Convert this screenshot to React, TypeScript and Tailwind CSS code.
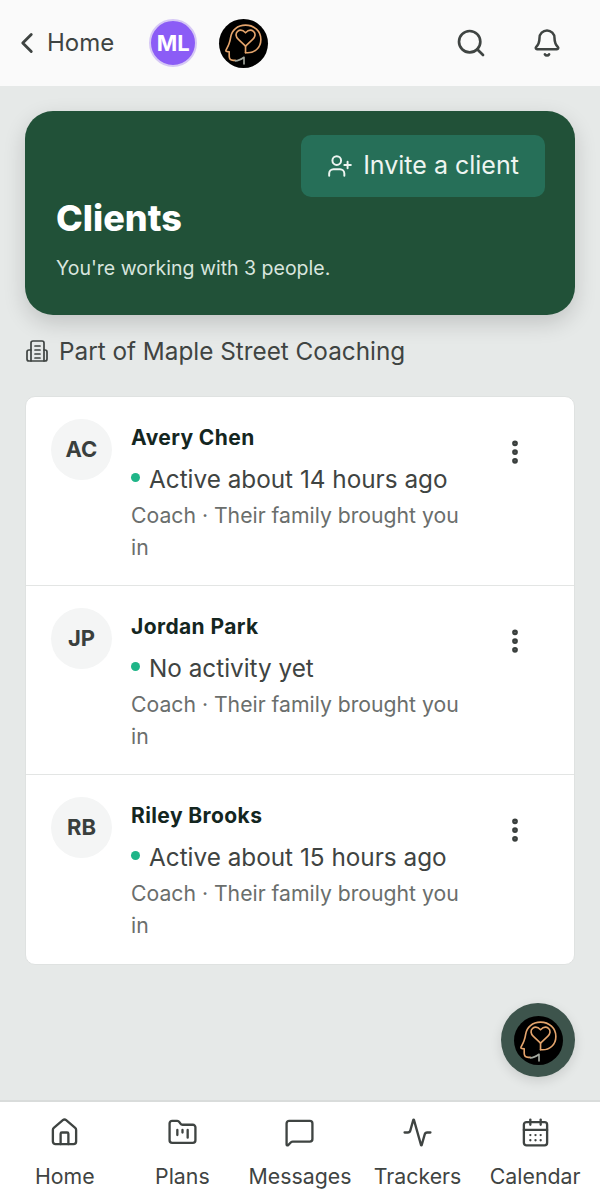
import {
  Activity,
  Bell,
  CalendarDays,
  ChevronLeft,
  EllipsisVertical,
  FolderKanban,
  House,
  MessageSquare,
  Search,
  UserPlus,
} from "lucide-react";

const clients = [
  { initials: "AC", name: "Avery Chen", status: "Active about 14 hours ago" },
  { initials: "JP", name: "Jordan Park", status: "No activity yet" },
  { initials: "RB", name: "Riley Brooks", status: "Active about 15 hours ago" },
];

const navItems = [
  { label: "Home", icon: House },
  { label: "Plans", icon: FolderKanban },
  { label: "Messages", icon: MessageSquare },
  { label: "Trackers", icon: Activity },
  { label: "Calendar", icon: CalendarDays },
];

function BrandLogo({ className }: { className: string }) {
  return (
    <div className={`rounded-full bg-black ${className}`}>
      <svg viewBox="0 0 48 48" fill="none" className="w-full h-full">
        <path
          d="M26 33c9 1 15-5 15-13 0-8-6.500-14-15-14-8 0-13.500 5-14.500 11.500-.4 2.500-.8 4.500-1.600 6.500-.8 2.500-2 4.500-3 6.500-.4.8 0 1.300.8 1.400l2.300.3v4.300c0 2.500 1.500 4 4 4H16"
          stroke="#e4a46c"
          strokeWidth="1.600"
          strokeLinecap="round"
          strokeLinejoin="round"
        />
        <path
          d="M26 26.500l-7-6.500c-2.800-2.500-3-6-.8-7.800 2.200-1.800 5.300-1.300 7.800 1.300 2.500-2.600 5.600-3.100 7.800-1.300 2.200 1.800 2 5.300-.8 7.800z"
          stroke="#e4a46c"
          strokeWidth="1.600"
          strokeLinejoin="round"
        />
        <path d="M26 26.500V33" stroke="#e4a46c" strokeWidth="1.600" strokeLinecap="round" />
        <path
          d="M16 41c3 0 5-1 8.500-3.500V44"
          stroke="#a3a89f"
          strokeWidth="1.600"
          strokeLinecap="round"
          strokeLinejoin="round"
        />
      </svg>
    </div>
  );
}

function OrgIcon() {
  return (
    <svg
      viewBox="0 0 24 24"
      fill="none"
      stroke="currentColor"
      strokeWidth="1.700"
      strokeLinecap="round"
      strokeLinejoin="round"
      className="w-[24px] h-[24px] mr-[10px] shrink-0"
    >
      <path d="M6 22V4a2 2 0 0 1 2-2h9a2 2 0 0 1 2 2v18" />
      <path d="M6 11H4a2 2 0 0 0-2 2v7a2 2 0 0 0 2 2h16a2 2 0 0 0 2-2v-7a2 2 0 0 0-2-2h-1" />
      <path d="M10 7h5M10 11h5M10 15h5M10 19h5" />
    </svg>
  );
}

function ClientRow({
  initials,
  name,
  status,
}: {
  initials: string;
  name: string;
  status: string;
}) {
  return (
    <div className="flex h-[189px] border-b border-[#e3e5e4] last:border-b-0 pl-[25px] pr-[44px] pt-[22px]">
      <div className="w-[61px] h-[61px] shrink-0 rounded-full bg-[#f4f5f5] flex items-center justify-center text-[22px] font-bold text-[#3a3f3d]">
        {initials}
      </div>
      <div className="ml-[19px] w-[340px] pt-[4px]">
        <div className="text-[21px] leading-[30px] font-bold text-[#14261f] tracking-[0.4px]">
          {name}
        </div>
        <div className="flex items-center mt-[11px] text-[#3f4442] text-[24.300px] leading-[30px]">
          <span className="w-[9px] h-[9px] rounded-full bg-[#1fb588] mr-[9px] -mt-[4px]" />
          {status}
        </div>
        <p className="mt-[5px] text-[21.200px] leading-[32px] text-[#6a6e6c]">
          Coach · Their family brought you in
        </p>
      </div>
      <EllipsisVertical
        className="ml-auto mt-[18px] text-[#3a3f3d] shrink-0"
        size={30}
        strokeWidth={2.600}
      />
    </div>
  );
}

export default function App() {
  return (
    <div
      className="relative flex flex-col h-[1200px] bg-[#e6e9e8] overflow-hidden"
      style={{ fontFamily: "Inter, sans-serif" }}
    >
      <header className="flex items-center h-[86px] shrink-0 bg-[#fafafa] pl-[10px] pr-[38px]">
        <ChevronLeft size={34} strokeWidth={2} className="text-[#3f4442]" />
        <span className="ml-[3px] text-[24px] text-[#3f4442]">Home</span>
        <div className="ml-[35px] w-[48px] h-[48px] rounded-full bg-[#8b5cf6] border-2 border-[#d6c8f5] flex items-center justify-center text-white text-[22px] font-bold">
          ML
        </div>
        <BrandLogo className="ml-[22px] w-[49px] h-[49px]" />
        <Search size={32} strokeWidth={2} className="ml-auto text-[#3f4442]" />
        <Bell size={30} strokeWidth={2} className="ml-[45px] text-[#3f4442]" />
      </header>

      <main className="flex-1 px-[25px] pt-[25px]">
        <section className="h-[204px] rounded-[28px] bg-[#215138] shadow-[0_8px_22px_rgba(0,0,0,0.16)] pl-[31px] pr-[30px] pt-[24px]">
          <div className="flex justify-end">
            <button className="flex items-center justify-center w-[244px] h-[62px] rounded-[10px] bg-[#266f58] text-[#eef5f1] text-[25px]">
              <UserPlus size={26} strokeWidth={1.800} className="mr-[10px]" />
              Invite a client
            </button>
          </div>
          <h1 className="-mt-[1px] text-[36px] leading-[44px] font-extrabold text-white">
            Clients
          </h1>
          <p className="mt-[14px] text-[19.500px] leading-[28px] text-[#d8e5de]">
            You're working with 3 people.
          </p>
        </section>

        <div className="flex items-center mt-[20px] h-[32px] text-[24.300px] text-[#3f4442]">
          <OrgIcon />
          Part of Maple Street Coaching
        </div>

        <div className="mt-[29px] rounded-[10px] bg-white border border-[#dfe2e1] overflow-hidden">
          {clients.map((c) => (
            <ClientRow key={c.initials} {...c} />
          ))}
        </div>
      </main>

      <div className="absolute left-[501px] top-[1003px] w-[74px] h-[74px] rounded-full bg-[#3d544c] shadow-[0_4px_12px_rgba(0,0,0,0.12)] flex items-center justify-center">
        <BrandLogo className="w-[49px] h-[49px]" />
      </div>

      <nav className="flex h-[100px] shrink-0 border-t-2 border-[#d9dcdb] bg-white px-[6px]">
        {navItems.map(({ label, icon: Icon }) => (
          <div
            key={label}
            className="flex-1 flex flex-col items-center pt-[15px] text-[#3f4442]"
          >
            <Icon size={31} strokeWidth={1.800} />
            <span className="mt-[14px] text-[21.300px] leading-[28px] whitespace-nowrap">
              {label}
            </span>
          </div>
        ))}
      </nav>
    </div>
  );
}
